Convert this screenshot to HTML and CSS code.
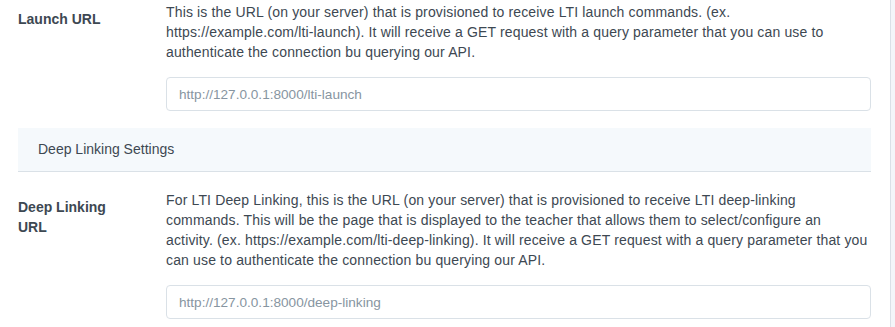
FILE: index.html
```html
<!DOCTYPE html>
<html lang="en">
<head>
  <meta charset="UTF-8">
  <title>LTI Settings</title>
  <meta name="viewport" content="width=device-width, initial-scale=1.0">
  <link rel="stylesheet" href="styles.css">
</head>
<body>
<div class="card">
  <div class="field">
    <label class="field-label" for="launch">Launch URL</label>
    <div class="field-body">
      <p class="help">This is the URL (on your server) that is provisioned to receive LTI launch commands. (ex. https://example.com/lti-launch). It will receive a GET request with a query parameter that you can use to authenticate the connection bu querying our API.</p>
      <input id="launch" class="text-input" placeholder="http://127.0.0.1:8000/lti-launch">
    </div>
  </div>

  <div class="section-head">Deep Linking Settings</div>

  <div class="field field-after-head">
    <label class="field-label" for="deep">Deep Linking URL</label>
    <div class="field-body">
      <p class="help">For LTI Deep Linking, this is the URL (on your server) that is provisioned to receive LTI deep-linking commands. This will be the page that is displayed to the teacher that allows them to select/configure an activity. (ex. https://example.com/lti-deep-linking). It will receive a GET request with a query parameter that you can use to authenticate the connection bu querying our API.</p>
      <input id="deep" class="text-input" placeholder="http://127.0.0.1:8000/deep-linking">
    </div>
  </div>
</div>
</body>
</html>
```

FILE: styles.css
```css
body {
  margin: 0;
  background: #f3f6f9;
  color: #3d4852;
  font-family: 'Liberation Sans', Arial, sans-serif;
  font-size: 14px;
}
.card {
  width: 853px;
  padding: 2px 19px 8px 18px;
  background: #fff;
  border-right: 1px solid #dae1e7;
  height: 100vh;
}
.field { display: flex; }
.field-after-head { padding-top: 18px; }
.field-label {
  width: 110px;
  flex: none;
  margin-right: 38px;
  margin-top: 7px;
  font-weight: bold;
  line-height: 20px;
  color: #3d4852;
}
.field-body { flex: 1; }
.help {
  margin: 0 0 15px;
  line-height: 20px;
  letter-spacing: 0.15px;
}
.text-input {
  display: block;
  box-sizing: border-box;
  width: 100%;
  height: 34px;
  margin: 0;
  padding: 0 12px;
  border: 1px solid #dae1e7;
  border-radius: 4px;
  font-family: inherit;
  font-size: 13.6px;
  color: #3d4852;
  background: #fff;
}
.text-input::placeholder { color: #8795a1; }
.section-head {
  margin-top: 17px;
  height: 43px;
  padding-left: 20px;
  line-height: 43px;
  background: #f5f9fc;
  border-bottom: 1px solid #dae1e7;
}
```
